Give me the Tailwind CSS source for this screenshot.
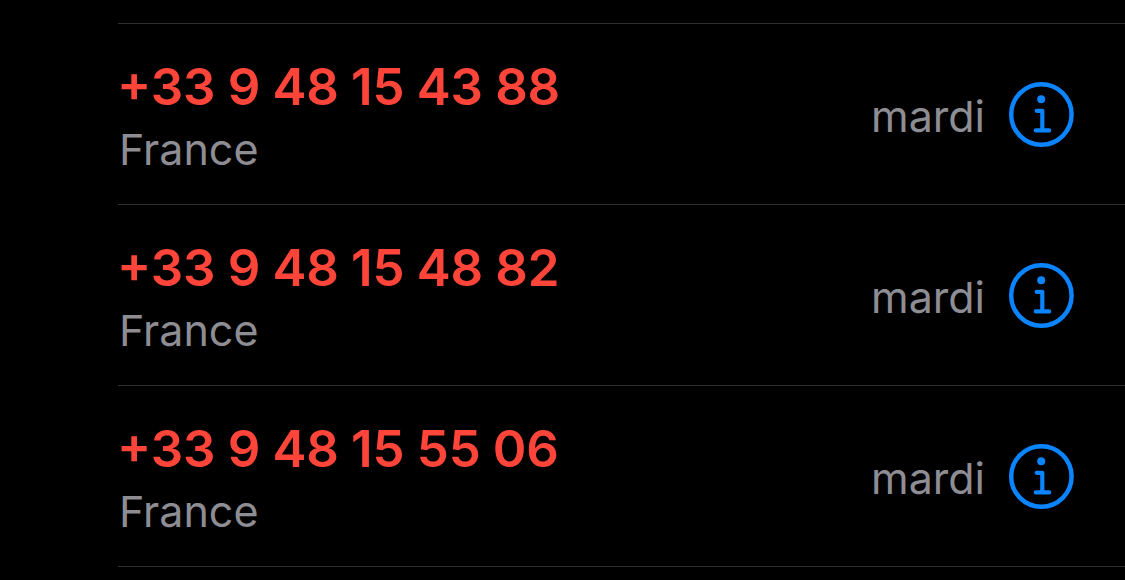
<!DOCTYPE html>
<html lang="fr">
<head>
<meta charset="utf-8">
<title>Appels</title>
<script src="https://cdn.jsdelivr.net/npm/@tailwindcss/browser@4"></script>
</head>
<body class="bg-black overflow-hidden font-['Inter',sans-serif]">
<svg class="hidden"><symbol id="info" viewBox="0 0 66 66"><g fill="none" stroke="#0a84ff"><circle cx="33.4" cy="32.5" r="30.2" stroke-width="4.5"/><circle cx="33.2" cy="17.2" r="4" fill="#0a84ff" stroke="none"/><path d="M28.7 28.8h5.6v19.6M27.8 48.4h13.4" stroke-width="4.2" stroke-linecap="round" stroke-linejoin="round"/></g></symbol></svg>
<main class="h-[580px] overflow-hidden pl-[118px] pt-[23px]">
<ul>
<li class="flex h-[181px] items-start justify-between border-t border-[#303032] pr-[51px] pl-px">
<div class="pt-8"><p class="-ml-0.5 mb-px text-[51px] leading-[61px] font-semibold text-[#ff453a] whitespace-nowrap tracking-[-0.15px] [word-spacing:-0.4px] [font-feature-settings:'case']">+33 9 48 15 43 88</p><p class="text-[43px] leading-[63px] text-[#8d8d93]">France</p></div>
<div class="flex items-center gap-[23px] pt-[58px]"><span class="pt-0.5 text-[43px] leading-[64px] text-[#8d8d93]">mardi</span><svg class="size-[66px]"><use href="#info"/></svg></div>
</li>
<li class="flex h-[181px] items-start justify-between border-t border-[#303032] pr-[51px] pl-px">
<div class="pt-8"><p class="-ml-0.5 mb-px text-[51px] leading-[61px] font-semibold text-[#ff453a] whitespace-nowrap tracking-[-0.15px] [word-spacing:-0.4px] [font-feature-settings:'case']">+33 9 48 15 48 82</p><p class="text-[43px] leading-[63px] text-[#8d8d93]">France</p></div>
<div class="flex items-center gap-[23px] pt-[58px]"><span class="pt-0.5 text-[43px] leading-[64px] text-[#8d8d93]">mardi</span><svg class="size-[66px]"><use href="#info"/></svg></div>
</li>
<li class="flex h-[182px] items-start justify-between border-y border-[#303032] pr-[51px] pl-px">
<div class="pt-8"><p class="-ml-0.5 mb-px text-[51px] leading-[61px] font-semibold text-[#ff453a] whitespace-nowrap tracking-[-0.15px] [word-spacing:-0.4px] [font-feature-settings:'case']">+33 9 48 15 55 06</p><p class="text-[43px] leading-[63px] text-[#8d8d93]">France</p></div>
<div class="flex items-center gap-[23px] pt-[58px]"><span class="pt-0.5 text-[43px] leading-[64px] text-[#8d8d93]">mardi</span><svg class="size-[66px]"><use href="#info"/></svg></div>
</li>
</ul>
</main>
</body>
</html>
